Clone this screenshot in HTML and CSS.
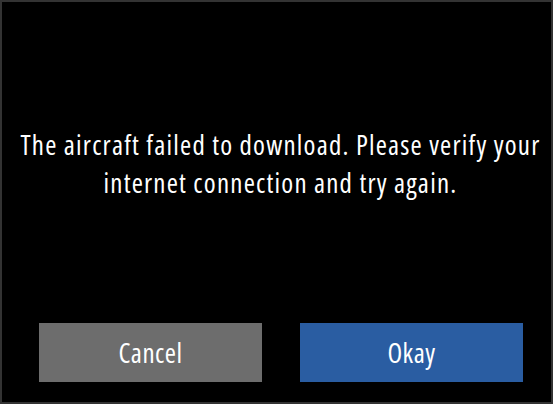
FILE: index.html
```html
<!DOCTYPE html>
<html lang="en">
<head>
    <meta charset="UTF-8">
    <title>Download failed</title>
    <link rel="stylesheet" href="styles.css">
</head>
<body>
    <div class="dialog">
        <p class="message">
            <span class="line">The aircraft failed to download. Please verify your</span>
            <span class="line">internet connection and try again.</span>
        </p>
        <div class="actions">
            <button class="btn btn_cancel">Cancel</button>
            <button class="btn btn_ok">Okay</button>
        </div>
    </div>
</body>
</html>
```

FILE: styles.css
```css
body {
    margin: 0;
    background: #000;
}
.dialog {
    width: 553px;
    height: 404px;
    box-sizing: border-box;
    border: 2px solid #333;
    background: #000;
    display: flex;
    flex-direction: column;
    font-family: "Open Sans", sans-serif;
    font-stretch: 75%;
    color: #fff;
}
.message {
    margin: 124px 0 0;
    padding-left: 8px;
    font-size: 27px;
    font-weight: 500;
    letter-spacing: 1.2px;
    line-height: 38px;
    text-align: center;
    flex: 1;
}
.line {
    display: block;
    white-space: nowrap;
}
.actions {
    display: flex;
    gap: 38px;
    padding: 0 28px 20px 37px;
}
.btn {
    flex: 1;
    height: 59px;
    padding: 0;
    border: 0;
    color: #fff;
    font-family: inherit;
    font-stretch: 75%;
    font-weight: 500;
    font-size: 27px;
    letter-spacing: 0.5px;
}
.btn_cancel {
    background: #6d6d6d;
}
.btn_ok {
    background: #2a5da2;
}
```
